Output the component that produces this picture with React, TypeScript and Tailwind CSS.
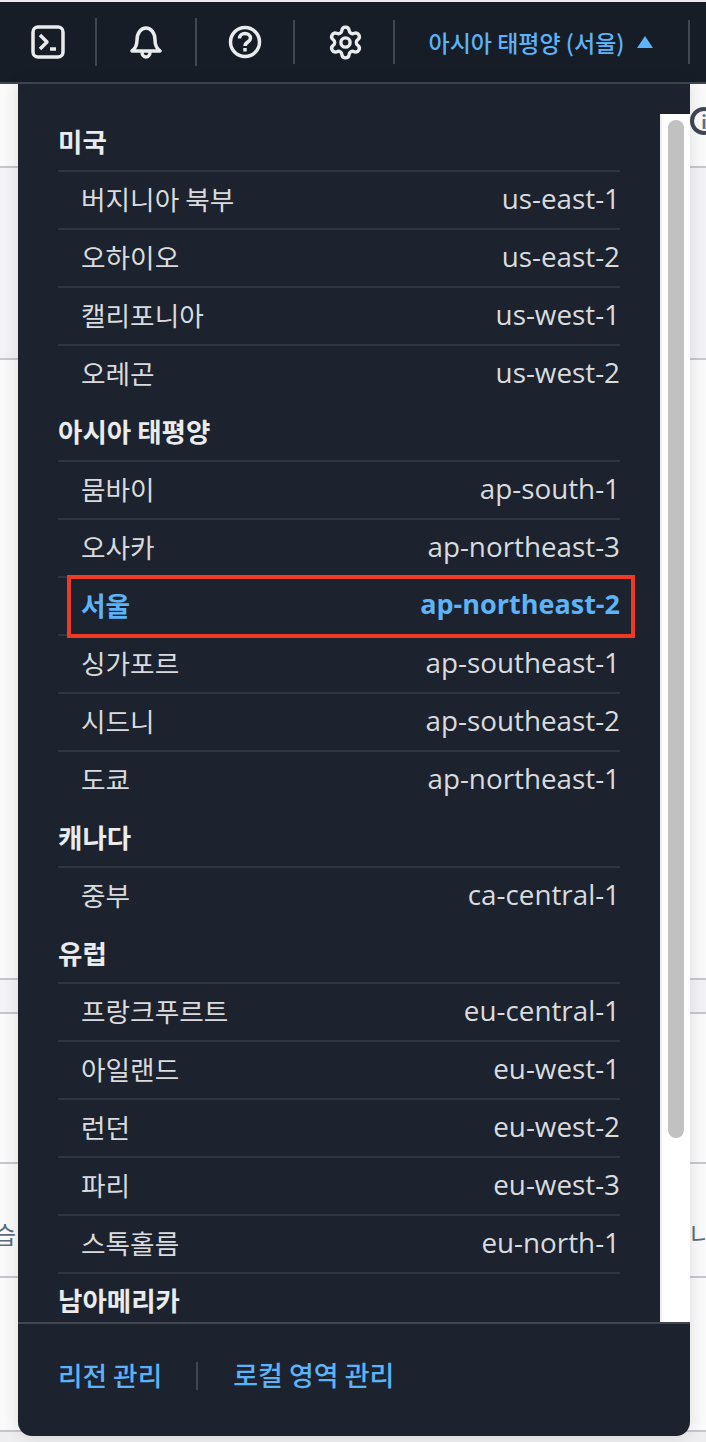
import type { ReactNode } from 'react';
import { Settings } from 'lucide-react';

const KOR = "font-['Noto_Sans_CJK_KR','Noto_Sans',sans-serif]";

const groups = [
  {
    name: '미국',
    regions: [
      ['버지니아 북부', 'us-east-1'],
      ['오하이오', 'us-east-2'],
      ['캘리포니아', 'us-west-1'],
      ['오레곤', 'us-west-2'],
    ],
  },
  {
    name: '아시아 태평양',
    regions: [
      ['뭄바이', 'ap-south-1'],
      ['오사카', 'ap-northeast-3'],
      ['서울', 'ap-northeast-2'],
      ['싱가포르', 'ap-southeast-1'],
      ['시드니', 'ap-southeast-2'],
      ['도쿄', 'ap-northeast-1'],
    ],
  },
  { name: '캐나다', regions: [['중부', 'ca-central-1']] },
  {
    name: '유럽',
    regions: [
      ['프랑크푸르트', 'eu-central-1'],
      ['아일랜드', 'eu-west-1'],
      ['런던', 'eu-west-2'],
      ['파리', 'eu-west-3'],
      ['스톡홀름', 'eu-north-1'],
    ],
  },
];

function TerminalIcon() {
  return (
    <svg width="34" height="34" viewBox="0 0 34 34" fill="none" stroke="#e9ebed" strokeWidth="3.5">
      <rect x="2" y="2" width="30" height="30" rx="5" />
      <path d="M9 10l7 7-7 7" strokeLinejoin="round" />
      <path d="M19 24h6" />
    </svg>
  );
}

function BellIcon() {
  return (
    <svg width="32" height="34" viewBox="0 0 32 34" fill="none" stroke="#e9ebed" strokeWidth="3.5" strokeLinejoin="round">
      <path d="M2 26c4-3 5-6 5-11 0-7 4-12 9-12s9 5 9 12c0 5 1 8 5 11z" />
      <path d="M12 27c0 3 2 5 4 5s4-2 4-5" />
    </svg>
  );
}

function HelpIcon() {
  return (
    <svg width="34" height="34" viewBox="0 0 34 34" fill="none" stroke="#e9ebed" strokeWidth="3.5">
      <circle cx="17" cy="17" r="14.5" />
      <path d="M11.5 13.5c0-3 2.4-5 5.500-5s5.500 2 5.500 4.700c0 3.800-5.500 3.800-5.500 7.800" />
      <path d="M17 23v3.500" />
    </svg>
  );
}

function NavDivider({ tall }: { tall?: boolean }) {
  return <div className={`w-[2px] bg-[#414750] ${tall ? 'h-12' : 'h-11'}`} />;
}

function RegionRow({ label, code }: { label: string; code: string }) {
  const active = code === 'ap-northeast-2';
  return (
    <li
      className={`relative flex h-[58px] items-center justify-between border-t-2 border-[#2f3640] pb-[1px] pl-[23px] text-[26.7px] ${
        active ? 'font-bold text-[#5db3f7]' : 'text-[#d9dbde]'
      }`}
    >
      <span>{label}</span>
      <span className={`-mt-[2px] font-['Open_Sans',sans-serif] ${active ? 'text-[27px]' : 'text-[27.8px]'}`}>{code}</span>
      {active && (
        <div className="absolute -right-[15px] -top-[3px] left-[9px] z-10 h-[63px] border-4 border-[#ee3a22]" />
      )}
    </li>
  );
}

function RegionMenu() {
  return (
    <div
      className={`absolute left-[18px] top-[84px] flex h-[1352px] w-[672px] flex-col rounded-b-[14px] bg-[#1c232e] shadow-[0_0_16px_rgba(0,7,22,0.12)] ${KOR}`}
    >
      <div className="flex min-h-0 flex-1">
        <div className="w-[642px] overflow-hidden pl-10 pt-[28px]">
          <div className="w-[562px]">
            {groups.map((g) => (
              <div key={g.name}>
                <h3 className="h-[58px] text-[26.5px] font-bold leading-[58px] text-[#e9ebed]">{g.name}</h3>
                <ul>
                  {g.regions.map(([label, code]) => (
                    <RegionRow key={code} label={label} code={code} />
                  ))}
                </ul>
              </div>
            ))}
            <h3 className="h-[58px] border-t-2 border-[#2f3640] text-[26.5px] font-bold leading-[52px] text-[#e9ebed]">남아메리카</h3>
          </div>
        </div>
        <div className="mt-[30px] w-[30px] border-l-2 border-[#f0f0f0] bg-white pl-[6px] pt-[6px]">
          <div className="h-[1018px] w-4 rounded-full bg-[#c1c1c1]" />
        </div>
      </div>
      <div className="flex h-[114px] items-center border-t-2 border-[#414750] pb-[9px] pl-10 text-[26.7px] font-medium text-[#5db3f7]">
        <span>리전 관리</span>
        <div className="ml-[34px] mr-[35px] h-7 w-[2px] bg-[#414750]" />
        <span className="text-[27px]">로컬 영역 관리</span>
      </div>
    </div>
  );
}

// page behind the menu, only its edges show
function TableRow({ h, shade, children }: { h: string; shade?: boolean; children?: ReactNode }) {
  return (
    <div className={`flex items-center justify-between border-b-2 border-[#c6c6cd] ${h} ${shade ? 'bg-[#f3f3f7]' : 'bg-[#fafafa]'}`}>
      {children}
    </div>
  );
}

export default function App() {
  return (
    <div className={`relative h-[1442px] w-[706px] overflow-hidden bg-[#eeeef0] ${KOR}`}>
      <div className="h-[2px] bg-[#ececec]" />
      <header className="flex h-[82px] items-center border-b-2 border-[#414750] bg-[#161d26]">
        <div className="flex w-[95px] justify-center"><TerminalIcon /></div>
        <NavDivider tall />
        <div className="flex w-[98px] justify-center"><BellIcon /></div>
        <NavDivider tall />
        <div className="flex w-[96px] justify-center"><HelpIcon /></div>
        <NavDivider />
        <div className="flex w-[98px] justify-center pl-[2px]"><Settings size={37} color="#e9ebed" strokeWidth={2.2} /></div>
        <NavDivider />
        <div className="flex w-[293px] items-center justify-center gap-[12px] pr-[2px] text-[23px] font-medium text-[#5db3f7]">
          <span>아시아 태평양 (서울)</span>
          <span className="h-0 w-0 border-x-[8px] border-b-[12px] border-x-transparent border-b-[#5db3f7]" />
        </div>
        <NavDivider />
      </header>
      <main className="text-2xl text-[#5f6b7a]">
        <TableRow h="h-[84px]">
          <span />
          <span className="-mr-[12px] -mt-[8px] flex h-[28px] w-[28px] items-center justify-center rounded-full border-4 border-[#414750] text-lg font-bold">i</span>
        </TableRow>
        <TableRow h="h-[192px]" shade />
        <TableRow h="h-[620px]" />
        <TableRow h="h-[34px]" shade />
        <TableRow h="h-[150px]" />
        <TableRow h="h-[114px]">
          <span className="-ml-[6px] mt-[28px]">습</span>
          <span className="-mr-[6px] mt-[28px]">니</span>
        </TableRow>
        <TableRow h="h-[154px]" />
      </main>
      <RegionMenu />
    </div>
  );
}
